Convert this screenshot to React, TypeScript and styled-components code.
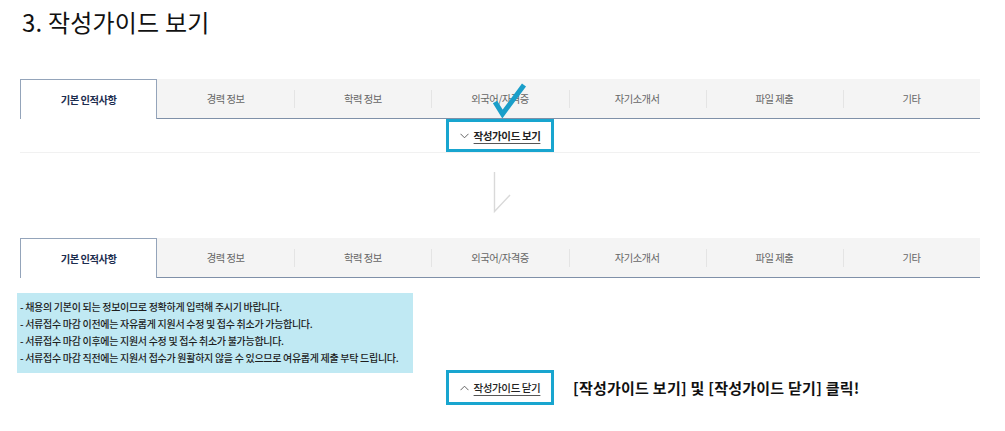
import React from "react";
import styled, { createGlobalStyle } from "styled-components";

const GlobalStyle = createGlobalStyle`
  html, body { margin: 0; padding: 0; background: #ffffff; }
  body { font-family: "Noto Sans CJK KR", "Noto Sans", sans-serif; color: #111; }
`;

const CYAN = "#18a5cf";

const Page = styled.div`
  width: 1005px;
  height: 431px;
  box-sizing: border-box;
  padding: 0 25px 0 20px;
  overflow: hidden;
`;

const Title = styled.h1`
  margin: 0;
  padding: 6px 0 0 2px;
  height: 79px;
  box-sizing: border-box;
  font-size: 24px;
  line-height: 32px;
  font-weight: 400;
  letter-spacing: 0.2px;
  color: #111;
`;

const Section = styled.section`
  position: relative;
  width: 960px;
`;

const TabBar = styled.div`
  display: grid;
  grid-template-columns: repeat(7, 1fr);
  height: 40px;
  background: #f4f4f4;
`;

const Tab = styled.div<{ $active?: boolean; $sep?: boolean }>`
  position: relative;
  display: flex;
  align-items: center;
  justify-content: center;
  box-sizing: border-box;
  font-size: 10.3px;
  letter-spacing: -0.5px;
  font-weight: ${(p) => (p.$active ? 700 : 400)};
  color: ${(p) => (p.$active ? "#1c2d4f" : "#666")};
  background: ${(p) => (p.$active ? "#ffffff" : "transparent")};
  border: ${(p) => (p.$active ? "1px solid #94a4ba" : "none")};
  border-bottom: ${(p) => (p.$active ? "none" : "1px solid #7f90a8")};
  &::before {
    content: "";
    display: ${(p) => (p.$sep ? "block" : "none")};
    position: absolute;
    left: 0;
    top: 11px;
    height: 18px;
    width: 1px;
    background: #e4e4e4;
  }
`;

const ToggleRow = styled.div<{ $line?: boolean }>`
  display: flex;
  justify-content: center;
  border-bottom: ${(p) => (p.$line ? "1px solid #f1f1f1" : "none")};
`;

const GuideButton = styled.div<{ $bold?: boolean; $tall?: boolean }>`
  display: flex;
  align-items: center;
  justify-content: center;
  gap: 5px;
  width: 108px;
  height: ${(p) => (p.$tall ? "35px" : "33px")};
  box-sizing: border-box;
  border: 3px solid ${CYAN};
  background: #fff;
  font-size: 10.5px;
  letter-spacing: -0.4px;
  font-weight: ${(p) => (p.$bold ? 700 : 500)};
  color: #222;
`;

const ButtonLabel = styled.span`
  text-decoration: underline;
  text-underline-offset: 3px;
  text-decoration-color: #555;
`;

const CheckMark = styled.svg`
  position: absolute;
  left: 470px;
  top: 3px;
`;

const ArrowBox = styled.div`
  display: flex;
  justify-content: center;
  padding: 19px 0 0 6px;
  height: 85px;
  box-sizing: border-box;
`;

const GuideBox = styled.div`
  margin: 15px 0 0 -3px;
  width: 396px;
  box-sizing: border-box;
  padding: 5px 0 7px 3px;
  background: #c0e9f3;
  font-size: 10px;
  line-height: 17px;
  font-weight: 500;
  letter-spacing: -0.3px;
  color: #1d1d1d;
`;

const GuideLine = styled.div`
  white-space: nowrap;
`;

const CloseRow = styled.div`
  display: grid;
  grid-template-columns: 1fr auto 1fr;
  align-items: center;
  margin-top: -3px;
`;

const Note = styled.div`
  padding-left: 19px;
  font-size: 15px;
  font-weight: 700;
  letter-spacing: 0.25px;
  color: #111;
  white-space: nowrap;
`;

const tabs = ["기본 인적사항", "경력 정보", "학력 정보", "외국어/자격증", "자기소개서", "파일 제출", "기타"];

const Tabs = () => (
  <TabBar>
    {tabs.map((t, i) => (
      <Tab key={t} $active={i === 0} $sep={i >= 2}>
        {t}
      </Tab>
    ))}
  </TabBar>
);

const ChevronDown = () => (
  <svg width="9" height="6" viewBox="0 0 9 6">
    <path d="M0.5 0.8 L4.5 4.8 L8.5 0.8" fill="none" stroke="#555" strokeWidth="0.9" />
  </svg>
);

const ChevronUp = () => (
  <svg width="9" height="6" viewBox="0 0 9 6">
    <path d="M0.5 5.2 L4.5 1.2 L8.5 5.2" fill="none" stroke="#555" strokeWidth="0.9" />
  </svg>
);

export default function App() {
  return (
    <>
      <GlobalStyle />
      <Page>
        <Title>3. 작성가이드 보기</Title>
        <Section>
          <Tabs />
          <ToggleRow $line>
            <GuideButton $bold>
              <ChevronDown />
              <ButtonLabel>작성가이드 보기</ButtonLabel>
            </GuideButton>
          </ToggleRow>
          <CheckMark width="40" height="40" viewBox="0 0 40 40">
            <path d="M5 20 L12.5 32 L34 3" fill="none" stroke="#1a9ec9" strokeWidth="5" />
          </CheckMark>
        </Section>
        <ArrowBox>
          <svg width="20" height="42" viewBox="0 0 20 42">
            <path d="M1.5 0 L1.5 39.5 L17 23" fill="none" stroke="#d9d9d9" strokeWidth="1.4" />
          </svg>
        </ArrowBox>
        <Section>
          <Tabs />
          <GuideBox>
            <GuideLine>- 채용의 기본이 되는 정보이므로 정확하게 입력해 주시기 바랍니다.</GuideLine>
            <GuideLine>- 서류접수 마감 이전에는 자유롭게 지원서 수정 및 접수 취소가 가능합니다.</GuideLine>
            <GuideLine>- 서류접수 마감 이후에는 지원서 수정 및 접수 취소가 불가능합니다.</GuideLine>
            <GuideLine>- 서류접수 마감 직전에는 지원서 접수가 원활하지 않을 수 있으므로 여유롭게 제출 부탁 드립니다.</GuideLine>
          </GuideBox>
          <CloseRow>
            <span />
            <GuideButton $tall>
              <ChevronUp />
              <ButtonLabel>작성가이드 닫기</ButtonLabel>
            </GuideButton>
            <Note>[작성가이드 보기] 및 [작성가이드 닫기] 클릭!</Note>
          </CloseRow>
        </Section>
      </Page>
    </>
  );
}
